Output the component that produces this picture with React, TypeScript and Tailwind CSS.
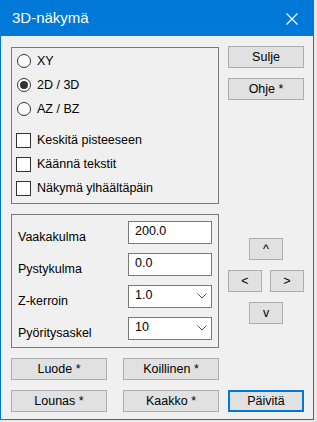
import React from "react";

const font = { fontFamily: '"Liberation Sans", Arial, sans-serif' };

const Button = (props: { label: string; className?: string; primary?: boolean }) => (
	<div
		className={
			"flex items-center justify-center h-[22px] bg-[#e1e1e1] text-[12.5px] text-black " +
			(props.primary ? "border-2 border-[#0078d7] " : "border border-[#adadad] ") +
			(props.className || "")
		}
	>
		{props.label}
	</div>
);

const Radio = (props: { label: string; checked?: boolean }) => (
	<div className="flex items-center h-6 pl-[5px]">
		<div className="w-[14px] h-[14px] rounded-full border border-[#333] bg-white flex items-center justify-center">
			{props.checked ? <div className="w-[8px] h-[8px] rounded-full bg-[#333]"></div> : <></>}
		</div>
		<div className="ml-[6px]">{props.label}</div>
	</div>
);

const Check = (props: { label: string }) => (
	<div className="flex items-center h-6 pl-[4px]">
		<div className="w-[15px] h-[15px] border border-[#333] bg-white"></div>
		<div className="ml-[6px]">{props.label}</div>
	</div>
);

const Chevron = () => (
	<svg width="10" height="6" viewBox="0 0 10 6" className="mr-[4px]">
		<path d="M0.5 0.5 L5 5 L9.5 0.5" fill="none" stroke="#555" strokeWidth="1" />
	</svg>
);

const Field = (props: { label: string; value: string; select?: boolean }) => (
	<div className="flex items-center h-[23px]">
		<div className="flex-1 mt-[10px]">{props.label}</div>
		<div className="w-[84px] h-[23px] bg-white border border-[#7a7a7a] flex items-center justify-between pl-[6px] pb-[2px]">
			<span>{props.value}</span>
			{props.select ? <Chevron /> : <></>}
		</div>
	</div>
);

export default function App() {
	return (
		<div className="w-[317px] h-[422px] bg-[#e8e8e8]" style={font}>
			<div className="w-[314px] h-[420px] bg-[#f0f0f0] border border-[#0078d7] flex flex-col text-[12.5px] text-black">
				<div className="h-[35px] bg-[#0078d7] flex items-center justify-between pl-[11px] pr-[15px] shrink-0">
					<div className="text-white text-[15px]">3D-näkymä</div>
					<svg width="12" height="12" viewBox="0 0 12 12">
						<path d="M0.5 0.5 L11.5 11.5 M11.5 0.5 L0.5 11.5" stroke="#fff" strokeWidth="1.2" />
					</svg>
				</div>
				<div className="flex pl-[10px]">
					<div className="w-[208px] flex flex-col">
						<div className="mt-[11px] h-[157px] border border-[#7a7a7a] pt-[1px]">
							<Radio label="XY" />
							<Radio label="2D / 3D" checked />
							<Radio label="AZ / BZ" />
							<div className="h-[7px]"></div>
							<Check label="Keskitä pisteeseen" />
							<Check label="Käännä tekstit" />
							<Check label="Näkymä ylhäältäpäin" />
						</div>
						<div className="mt-[10px] h-[134px] border border-[#7a7a7a] pl-[6px] pr-[6px] pt-[6px] flex flex-col gap-[9px]">
							<Field label="Vaakakulma" value="200.0" />
							<Field label="Pystykulma" value="0.0" />
							<Field label="Z-kerroin" value="1.0" select />
							<Field label="Pyöritysaskel" value="10" select />
						</div>
					</div>
					<div className="w-[76px] ml-[9px] flex flex-col">
						<Button label="Sulje" className="mt-[10px]" />
						<Button label="Ohje *" className="mt-[10px]" />
						<div className="mt-[138px] flex flex-col gap-[10px]">
							<div className="flex justify-center">
								<Button label="^" className="w-[34px]" />
							</div>
							<div className="flex justify-between">
								<Button label="<" className="w-[34px]" />
								<Button label=">" className="w-[34px]" />
							</div>
							<div className="flex justify-center">
								<Button label="v" className="w-[34px]" />
							</div>
						</div>
					</div>
				</div>
				<div className="flex pl-[10px] mt-[10px] gap-[16px]">
					<Button label="Luode *" className="w-[96px]" />
					<Button label="Koillinen *" className="w-[96px]" />
				</div>
				<div className="flex pl-[10px] mt-[10px]">
					<Button label="Lounas *" className="w-[96px]" />
					<Button label="Kaakko *" className="w-[96px] ml-[16px]" />
					<Button label="Päivitä" className="w-[76px] ml-[9px]" primary />
				</div>
			</div>
		</div>
	);
}
